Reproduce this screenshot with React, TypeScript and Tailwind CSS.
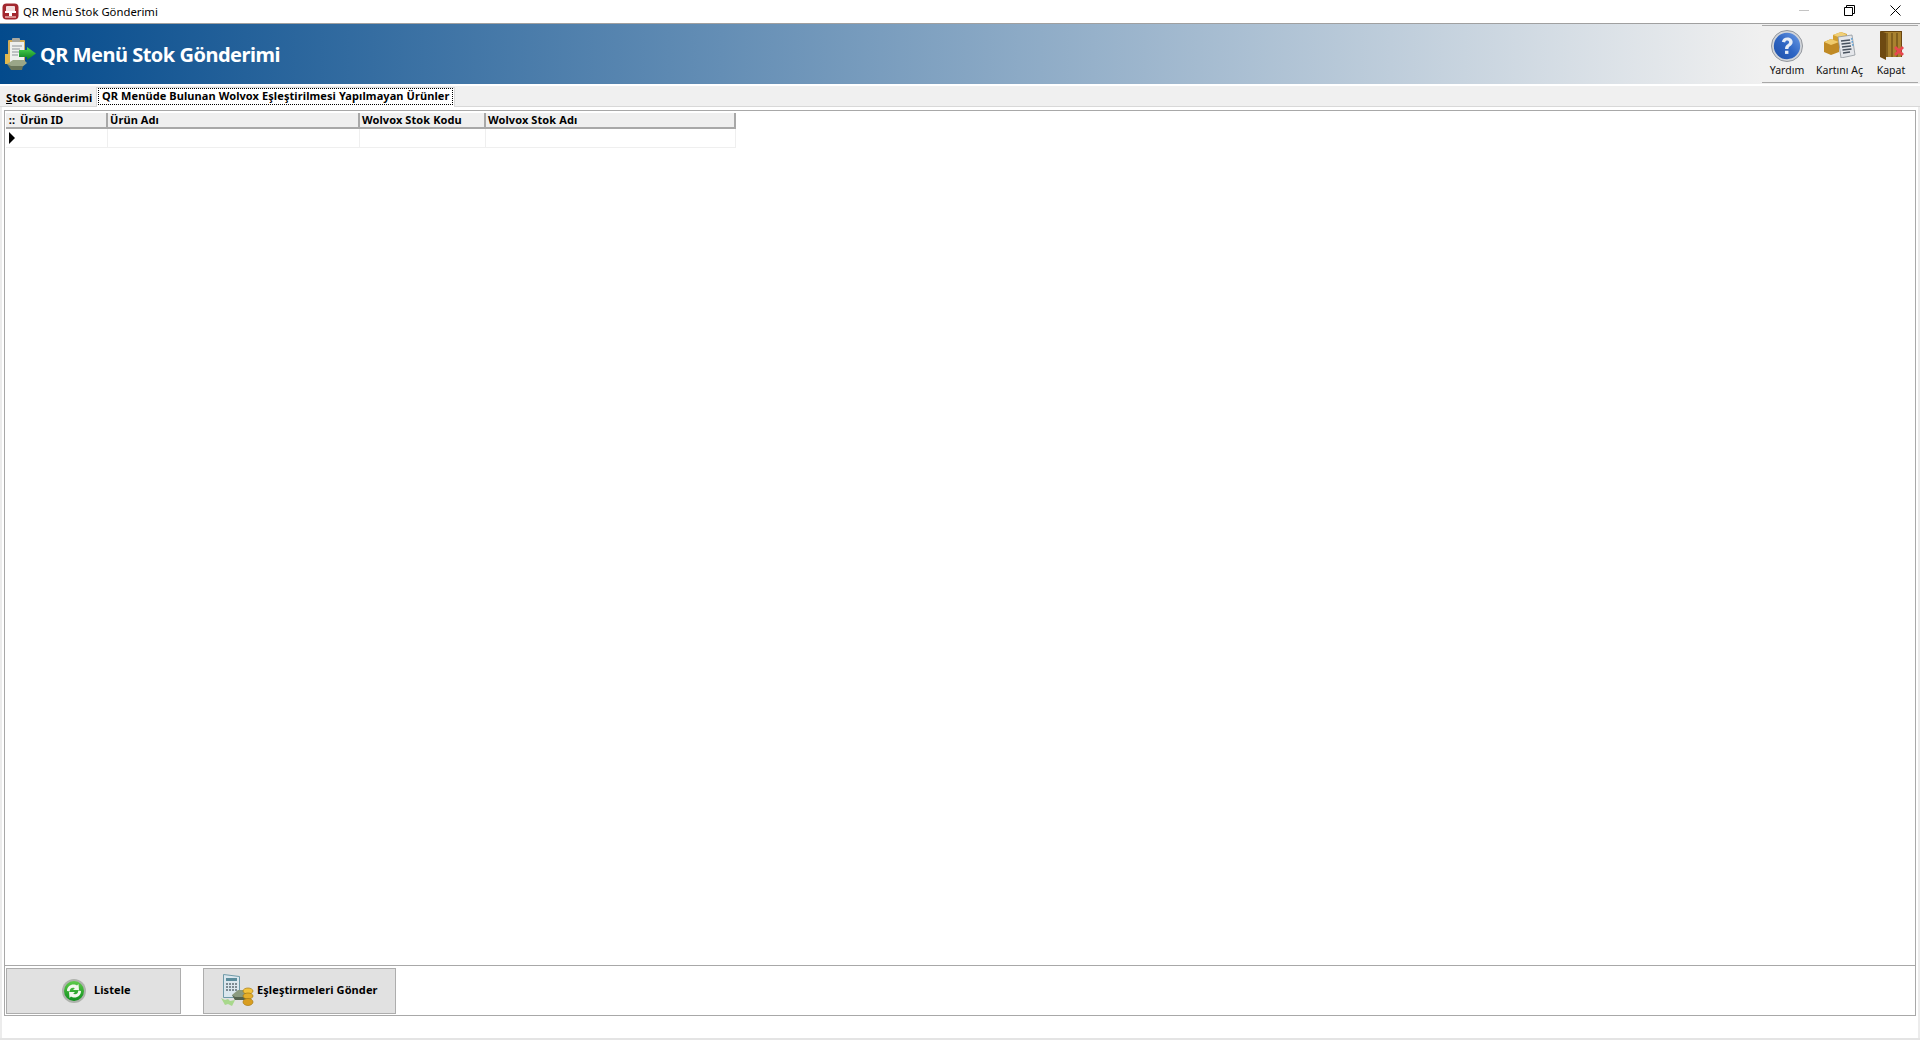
import React from 'react';

const ui = { fontFamily: '"Noto Sans", "Liberation Sans", sans-serif' };

const AppIcon = () => (
  <svg width="17" height="17" viewBox="0 0 17 17">
    <rect x="0.5" y="0.5" width="16" height="16" rx="4" fill="#a3282f" />
    <rect x="4" y="3" width="9" height="7" rx="1" fill="#f4dcdc" />
    <path d="M3 8h11v2H3zM7 10h3v3H7z" fill="#fff" />
    <rect x="3" y="13" width="11" height="2" fill="#d98c8c" />
  </svg>
);

const SendIcon = () => (
  <svg width="32" height="32" viewBox="0 0 32 32">
    <defs>
      <linearGradient id="ga" x1="0" y1="0" x2="0" y2="1">
        <stop offset="0" stopColor="#4fdc50" />
        <stop offset="1" stopColor="#0b7a1e" />
      </linearGradient>
    </defs>
    <rect x="3" y="2" width="17" height="23" rx="1" fill="#d1ab56" />
    <rect x="5" y="4" width="14" height="20" fill="#eef0ee" />
    <rect x="7" y="0" width="8" height="4" rx="1" fill="#a8a8a0" />
    <path d="M7 8h10M7 11h8M7 14h10M7 17h6" stroke="#8d949a" strokeWidth="1" />
    <rect x="0" y="16" width="5" height="10" fill="#e0b84f" />
    <path d="M2 26l6-4h11l3 3-6 5H6z" fill="#9aa688" />
    <path d="M2 26l4 6h11l1-4H6z" fill="#69755a" />
    <path d="M14 12h8V9l9 6.500-9 6.500v-3h-8z" fill="url(#ga)" />
  </svg>
);

const HelpIcon = () => (
  <svg width="32" height="32" viewBox="0 0 34 34" className="mt-[2px]">
    <defs>
      <linearGradient id="gh" x1="0" y1="1" x2="1" y2="0">
        <stop offset="0" stopColor="#1d4fa8" />
        <stop offset="0.5" stopColor="#2f66c4" />
        <stop offset="1" stopColor="#6f9de6" />
      </linearGradient>
    </defs>
    <circle cx="17" cy="17" r="16.500" fill="#d2d5da" stroke="#8f939a" strokeWidth="1" />
    <circle cx="17" cy="17" r="14" fill="url(#gh)" />
    <path
      d="M11.500 12.500c.6-3 3-4.500 5.800-4.500 3.300 0 5.700 2 5.700 4.800 0 2.300-1.400 3.400-2.800 4.400-1.200.9-1.700 1.500-1.700 3h-3.600c0-2.500.9-3.700 2.400-4.800 1.100-.8 1.900-1.400 1.900-2.500 0-1-.8-1.700-1.900-1.700-1.200 0-2 .7-2.300 2z"
      fill="#e8eef8"
    />
    <rect x="14.900" y="22" width="3.600" height="3.400" fill="#e8eef8" />
  </svg>
);

const CardIcon = () => (
  <svg width="32" height="26" viewBox="0 0 32 26">
    <path d="M9 3l8-3 6 2v12l-6 2-8-3z" fill="#d39f2e" />
    <path d="M9 3l8 3 6-3-6-3z" fill="#f0cf78" />
    <path d="M0 10l7-3 8 3v10l-8 3-7-3z" fill="#c08a24" />
    <path d="M0 10l7 3 8-3-8-3z" fill="#efcb6c" />
    <path d="M14 5l14-2 3 20-14 3z" fill="#e4e6ea" stroke="#8f959c" strokeWidth="0.800" />
    <path d="M17 9l9-1M17.500 12l9-1M18 15l9-1M18.500 18l9-1M19 21l7-1" stroke="#48525e" strokeWidth="1.500" />
    <path d="M27 7l1.500-.2M27.500 10l1.500-.2M28 13l1.500-.2" stroke="#5aa0d8" strokeWidth="1.500" />
  </svg>
);

const DoorIcon = () => (
  <svg width="25" height="29" viewBox="0 0 25 29">
    <rect x="1" y="0" width="21" height="26" fill="#6a4610" />
    <rect x="3" y="1" width="18" height="25" fill="#a9822f" />
    <path d="M7 2v24M12 2v24M17 2v24" stroke="#76561a" strokeWidth="1.500" />
    <path d="M0 0l6 2v27l-6-3z" fill="#6e4a12" />
    <path d="M14 17l2-2 3 3 3-3 2 2-3 3 3 3-2 2-3-3-3 3-2-2 3-3z" fill="#e8474f" />
  </svg>
);

const RefreshIcon = () => (
  <svg width="24" height="24" viewBox="0 0 24 24">
    <defs>
      <linearGradient id="gr" x1="0" y1="0" x2="0" y2="1">
        <stop offset="0" stopColor="#5ecb4a" />
        <stop offset="1" stopColor="#0e8f1d" />
      </linearGradient>
    </defs>
    <circle cx="12" cy="12" r="12" fill="#aeb2ac" />
    <circle cx="12" cy="12" r="10" fill="url(#gr)" />
    <path d="M5 12c0-4 3-6.500 6.500-6.500 1.500 0 2.500.4 3.500 1l1.500-1.500.5 6h-6l1.800-1.800c-2.800-1.200-5.300.5-5 3.300z" fill="#f2f8ee" />
    <path d="M19 12c0 4-3 6.500-6.500 6.500-1.500 0-2.500-.4-3.500-1L7.500 19 7 13h6l-1.800 1.800c2.800 1.200 5.300-.5 5-3.300z" fill="#f2f8ee" />
  </svg>
);

const MatchIcon = () => (
  <svg width="34" height="33" viewBox="0 0 34 33">
    <path d="M3.500.5l16 2v21h-16z" fill="#dbe7ee" stroke="#6f9aa8" strokeWidth="1" />
    <rect x="6" y="4" width="11" height="3" fill="#5b8c9b" />
    <path d="M6 10h11M6 13h11M6 16h11" stroke="#5f6e74" strokeWidth="1.500" strokeDasharray="2 1" />
    <path d="M12 21l6-5h9l3 3-4 7H15z" fill="#8a9a80" />
    <path d="M12 21l3 5h11l1-3H15z" fill="#55634f" />
    <path d="M1 24l4 2 3-1 2 2 5-1-3 6-4-2-3 1z" fill="#a8d88c" />
    <ellipse cx="28" cy="17" rx="5" ry="3" fill="#f2c23c" stroke="#a87a10" strokeWidth="0.700" />
    <ellipse cx="28" cy="22" rx="5" ry="3" fill="#e5ae2a" stroke="#a87a10" strokeWidth="0.700" />
    <ellipse cx="28" cy="28" rx="5" ry="3.500" fill="#d99e20" stroke="#a87a10" strokeWidth="0.700" />
  </svg>
);

const COLUMNS = [
  { label: 'Ürün ID', w: 'w-[90px]' },
  { label: 'Ürün Adı', w: 'w-[252px]' },
  { label: 'Wolvox Stok Kodu', w: 'w-[126px]' },
  { label: 'Wolvox Stok Adı', w: 'w-[250px]' },
];

const TOOLS = [
  { label: 'Yardım', w: 'w-[50px]', pr: 'pr-0', icon: <HelpIcon /> },
  { label: 'Kartını Aç', w: 'w-[55px]', pr: 'pr-0', icon: <CardIcon /> },
  { label: 'Kapat', w: 'w-[51px]', pr: 'pr-[3px]', icon: <DoorIcon /> },
];

export default function App() {
  return (
    <div className="w-[1920px] h-[1040px] bg-white flex flex-col overflow-hidden text-black" style={ui}>
      {/* pencere başlığı */}
      <div className="h-[23px] shrink-0 flex items-center">
        <div className="ml-[2px] w-[17px] h-[17px]"><AppIcon /></div>
        <span className="ml-[4px] text-[11.300px] leading-none">QR Menü Stok Gönderimi</span>
        <div className="ml-auto flex items-center h-full pb-[3px]">
          <div className="w-[10px] h-px bg-[#c4c4c4] mr-[35px]" />
          <svg width="11" height="11" viewBox="0 0 11 11" className="mr-[35px]" fill="none" stroke="#000">
            <path d="M.5 2.500h8v8h-8zM2.500 2.500v-2h8v8h-2" />
          </svg>
          <svg width="11" height="11" viewBox="0 0 11 11" className="mr-[19px]" stroke="#000">
            <path d="M.5.5l10 10M10.500.5l-10 10" />
          </svg>
        </div>
      </div>
      <div className="h-px shrink-0 bg-[#a0a0a0]" />

      {/* üst şerit */}
      <div className="h-[60px] shrink-0 flex bg-[#f0f0f0]">
        <div className="flex items-center flex-1 pl-[5px] min-w-0 bg-[linear-gradient(90deg,#034a8c_0%,#f0f0f0_100%)]">
          <SendIcon />
          <span className="ml-[3px] mt-[2px] text-[20px] font-bold text-white leading-none whitespace-nowrap tracking-[-0.5px]">QR Menü Stok Gönderimi</span>
        </div>
        <div className="w-[156px] mr-[2px] mb-[1px] mt-px border-y border-[#a8a8a8] flex">
          {TOOLS.map(t => (
            <div key={t.label} className={`${t.w} flex flex-col items-center`}>
              <div className="h-[38px] flex items-center justify-center">{t.icon}</div>
              <span className={`${t.pr} text-[10.500px] leading-[12px] text-[#111] whitespace-nowrap`}>{t.label}</span>
            </div>
          ))}
        </div>
      </div>
      <div className="h-[2px] shrink-0" />

      {/* sekmeler */}
      <div className="h-[21px] shrink-0 bg-[#f0f0f0] border-b border-[#d8d8d8] flex pl-[6px] font-bold text-[11px] tracking-[0.09px]">
        <span className="mt-[3px] leading-[18px] whitespace-nowrap w-[90px]"><span className="underline">S</span>tok Gönderimi</span>
        <div className="mt-px h-[20px] bg-white border border-b-0 border-[#d8d8d8] px-[1px]">
          <span className="block h-[17px] border border-dotted border-black px-[3px] leading-[14px] whitespace-nowrap">QR Menüde Bulunan Wolvox Eşleştirilmesi Yapılmayan Ürünler</span>
        </div>
      </div>

      {/* tablo alanı */}
      <div className="flex-1 min-h-0 flex flex-col border-x-2 border-[#ececec]">
        <div className="flex-1 min-h-0 mt-[3px] mx-[2px] border border-b-0 border-[#a8a8a8] flex flex-col">
          <div className="flex-1 min-h-0 pl-[1px] pt-[2px]">
            <div className="flex h-[16px] bg-[#efefef] w-[730px] border-b-2 border-[#a8a8a8] font-bold text-[11px] tracking-[0.09px]">
              <div className="w-[12px] text-center leading-[14px]">::</div>
              {COLUMNS.map(c => (
                <div key={c.label} className={`${c.w} pl-[2px] leading-[14px] border-r-2 border-[#a8a8a8] whitespace-nowrap`}>{c.label}</div>
              ))}
            </div>
            <div className="flex h-[19px] w-[730px] border-b border-[#efefef]">
              <div className="w-[12px] flex items-center justify-center">
                <div className="w-0 h-0 border-y-[6px] border-y-transparent border-l-[6px] border-l-black" />
              </div>
              {COLUMNS.map(c => (
                <div key={c.label} className={`${c.w} border-r border-[#efefef]`} />
              ))}
            </div>
          </div>
          <div className="h-[51px] shrink-0 border-y border-[#a8a8a8] flex items-center pl-[1px] font-bold text-[11px] tracking-[0.09px]">
            <button type="button" className="w-[175px] h-[46px] bg-[#e1e1e1] border border-[#adadad] flex items-center pl-[55px] gap-[8px]">
              <RefreshIcon />Listele
            </button>
            <button type="button" className="ml-[22px] w-[193px] h-[46px] bg-[#e1e1e1] border border-[#adadad] flex items-center pl-[16px] gap-[3px] whitespace-nowrap">
              <MatchIcon />Eşleştirmeleri Gönder
            </button>
          </div>
        </div>
        <div className="h-[22px] shrink-0" />
      </div>
      <div className="h-[2px] shrink-0 bg-[#e4e4e4]" />
    </div>
  );
}
